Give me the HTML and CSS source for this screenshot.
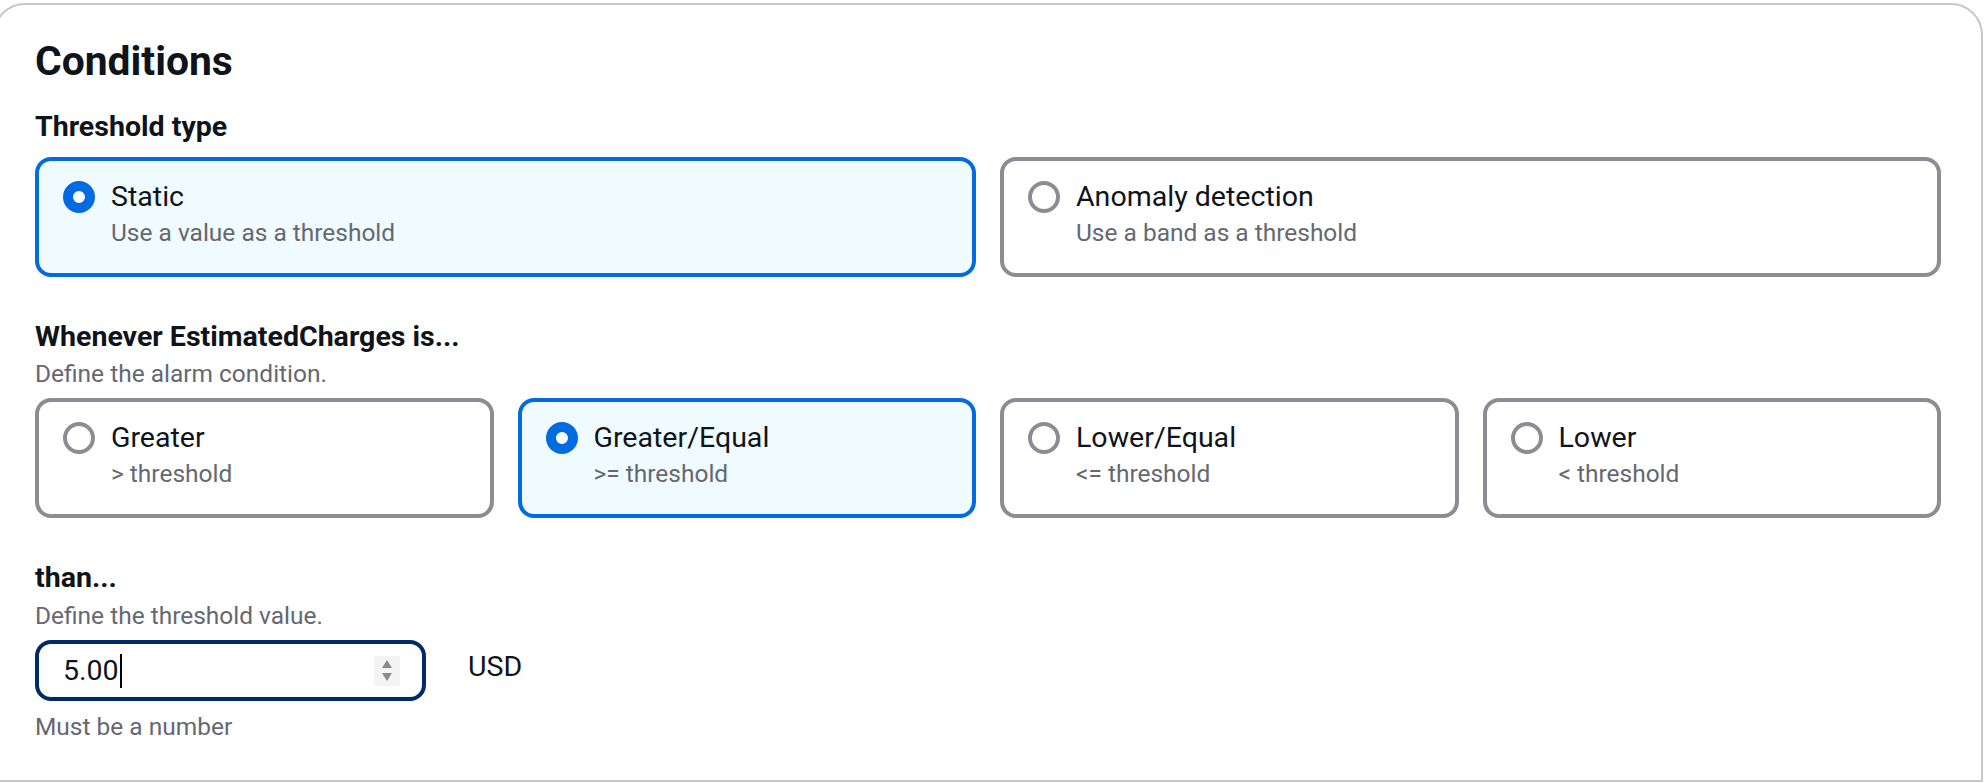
FILE: index.html
```html
<!DOCTYPE html>
<html lang="en">
<head>
<meta charset="utf-8">
<title>Conditions</title>
<link rel="stylesheet" href="styles.css">
</head>
<body>
<div class="container">
  <h2 class="title">Conditions</h2>

  <div class="field field-first">
    <div class="label">Threshold type</div>
    <div class="tiles cols-2 tiles-first">
      <div class="tile selected">
        <span class="radio"><svg viewBox="0 0 16 16" width="32" height="32"><circle cx="8" cy="8" r="7" stroke-width="2" class="rb-on"/><circle cx="8" cy="8" r="5" stroke-width="4" class="rf-on"/></svg></span>
        <div class="tile-text"><div class="tile-label">Static</div><div class="tile-desc">Use a value as a threshold</div></div>
      </div>
      <div class="tile">
        <span class="radio"><svg viewBox="0 0 16 16" width="32" height="32"><circle cx="8" cy="8" r="7" stroke-width="2" class="rb-off"/></svg></span>
        <div class="tile-text"><div class="tile-label">Anomaly detection</div><div class="tile-desc">Use a band as a threshold</div></div>
      </div>
    </div>
  </div>

  <div class="field">
    <div class="label">Whenever EstimatedCharges is...</div>
    <div class="desc">Define the alarm condition.</div>
    <div class="tiles cols-4">
      <div class="tile">
        <span class="radio"><svg viewBox="0 0 16 16" width="32" height="32"><circle cx="8" cy="8" r="7" stroke-width="2" class="rb-off"/></svg></span>
        <div class="tile-text"><div class="tile-label">Greater</div><div class="tile-desc">&gt; threshold</div></div>
      </div>
      <div class="tile selected">
        <span class="radio"><svg viewBox="0 0 16 16" width="32" height="32"><circle cx="8" cy="8" r="7" stroke-width="2" class="rb-on"/><circle cx="8" cy="8" r="5" stroke-width="4" class="rf-on"/></svg></span>
        <div class="tile-text"><div class="tile-label">Greater/Equal</div><div class="tile-desc">&gt;= threshold</div></div>
      </div>
      <div class="tile">
        <span class="radio"><svg viewBox="0 0 16 16" width="32" height="32"><circle cx="8" cy="8" r="7" stroke-width="2" class="rb-off"/></svg></span>
        <div class="tile-text"><div class="tile-label">Lower/Equal</div><div class="tile-desc">&lt;= threshold</div></div>
      </div>
      <div class="tile">
        <span class="radio"><svg viewBox="0 0 16 16" width="32" height="32"><circle cx="8" cy="8" r="7" stroke-width="2" class="rb-off"/></svg></span>
        <div class="tile-text"><div class="tile-label">Lower</div><div class="tile-desc">&lt; threshold</div></div>
      </div>
    </div>
  </div>

  <div class="field">
    <div class="label">than...</div>
    <div class="desc desc-2">Define the threshold value.</div>
    <div class="input-row">
      <div class="input">
        <span class="input-value">5.00</span><span class="caret"></span>
        <span class="spacer"></span>
        <span class="spinner">
          <svg viewBox="0 0 12 24" width="12" height="24"><path d="M6 1 L11 9 L1 9 Z" fill="#8a8a8a"/><path d="M1 14 L11 14 L6 22 Z" fill="#8a8a8a"/></svg>
        </span>
      </div>
      <div class="unit">USD</div>
    </div>
    <div class="constraint">Must be a number</div>
  </div>
</div>
</body>
</html>
```

FILE: styles.css
```css
html, body {
  margin: 0;
  padding: 0;
  background: #ffffff;
  overflow: hidden;
}

body {
  font-family: Roboto, "Liberation Sans", sans-serif;
  color: #0f141a;
}

.container {
  margin: 3px 1px 0 -7px;
  border: 2px solid #c6c6cd;
  border-radius: 32px 32px 0 0;
  padding: 32px 40px 37px 40px;
  background: #ffffff;
}

.title {
  margin: 0;
  font-size: 40.8px;
  line-height: 48px;
  font-weight: 700;
  color: #0f141a;
}

.field {
  margin-top: 40px;
}

.field-first {
  margin-top: 22px;
}

.label {
  font-size: 28.56px;
  line-height: 40px;
  font-weight: 700;
  color: #0f141a;
}

.desc {
  margin-top: 1px;
  font-size: 24.48px;
  line-height: 32px;
  color: #656871;
}

.desc-2 {
  margin-top: 2px;
}

.tiles {
  display: grid;
  gap: 24px;
  margin-top: 8px;
}

.tiles-first {
  margin-top: 10px;
}

.cols-2 {
  grid-template-columns: 1fr 1fr;
}

.cols-4 {
  grid-template-columns: repeat(4, 1fr);
}

.tile {
  display: flex;
  gap: 16px;
  border: 4px solid #8c8c94;
  border-radius: 16px;
  padding: 16px 24px 24px 24px;
  background: #ffffff;
}

.tile.selected {
  border-color: #006ce0;
  background: #f0fbff;
}

.radio {
  display: flex;
  align-items: center;
  height: 40px;
  flex: 0 0 32px;
}

.radio svg {
  display: block;
}

.rb-on {
  fill: #006ce0;
  stroke: #006ce0;
}

.rf-on {
  fill: #ffffff;
  stroke: #006ce0;
}

.rb-off {
  fill: #ffffff;
  stroke: #8c8c94;
}

.tile-label {
  font-size: 28.56px;
  line-height: 40px;
  color: #0f141a;
}

.tile-desc {
  font-size: 24.48px;
  line-height: 32px;
  color: #656871;
}

.input-row {
  display: flex;
  align-items: flex-start;
  gap: 42px;
  margin-top: 8px;
}

.input {
  box-sizing: border-box;
  width: 391px;
  height: 61px;
  border: 4px solid #002b66;
  border-radius: 16px;
  padding: 0 22px 0 24px;
  display: flex;
  align-items: center;
  background: #ffffff;
}

.input-value {
  font-size: 28.56px;
  line-height: 40px;
  color: #0f141a;
}

.caret {
  width: 2px;
  height: 34px;
  background: #000000;
  margin-left: 1px;
}

.spacer {
  flex: 1;
}

.spinner {
  width: 26px;
  height: 30px;
  background: #f4f4f4;
  display: flex;
  align-items: center;
  justify-content: center;
}

.spinner svg {
  display: block;
}

.unit {
  padding-top: 7px;
  font-size: 28.56px;
  line-height: 40px;
  color: #0f141a;
}

.constraint {
  margin-top: 10px;
  font-size: 24.48px;
  line-height: 32px;
  color: #656871;
}
```
